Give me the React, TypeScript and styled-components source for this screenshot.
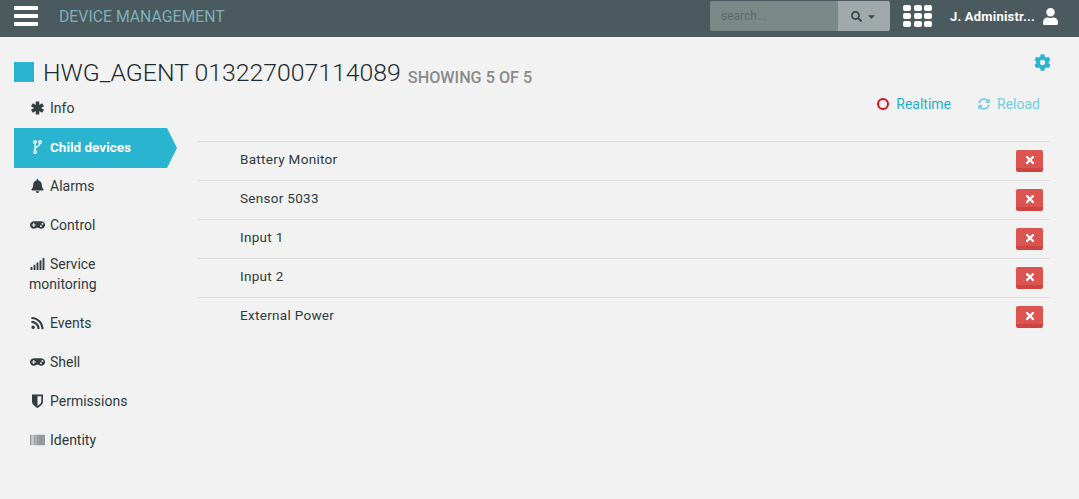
import React from "react";
import { createGlobalStyle, styled } from "styled-components";
import {
  FaBarcode,
  FaBell,
  FaCaretDown,
  FaCog,
  FaGamepad,
  FaRss,
  FaSearch,
  FaSignal,
  FaSyncAlt,
  FaTimes,
  FaUser,
} from "react-icons/fa";

const GlobalStyle = createGlobalStyle`
  html, body {
    margin: 0;
    padding: 0;
    background: #f2f2f2;
    font-family: Roboto, "Liberation Sans", sans-serif;
    color: #2f3a40;
  }
  * { box-sizing: border-box; }
`;

const Page = styled.div`
  width: 100%;
  height: 499px;
  overflow: hidden;
`;

const Header = styled.header`
  height: 37px;
  background: #4a5a5e;
  display: flex;
  align-items: center;
  padding: 0 20px 0 14px;
`;

const Burger = styled.div`
  width: 24px;
  display: flex;
  flex-direction: column;
  gap: 4px;
  margin-top: -5px;
  span {
    display: block;
    height: 4px;
    border-radius: 1px;
    background: #fff;
  }
`;

const AppTitle = styled.div`
  margin-left: 21px;
  font-size: 15.8px;
  color: #7fb0ba;
  flex: 1;
  margin-top: -4px;
`;

const Search = styled.div`
  width: 180px;
  height: 30px;
  display: flex;
  border-radius: 2px;
  overflow: hidden;
  margin-top: -5px;
`;

const SearchInput = styled.div`
  width: 128px;
  background: #7b8987;
  color: #5c6a6a;
  font-size: 12px;
  line-height: 30px;
  padding-left: 11px;
`;

const SearchAddon = styled.div`
  flex: 1;
  background: #a0a9a9;
  color: #38474b;
  display: flex;
  align-items: center;
  justify-content: center;
  gap: 4px;
  font-size: 11px;
`;

const Tiles = styled.div`
  margin: -5px 0 0 13px;
  width: 29px;
  display: grid;
  grid-template-columns: repeat(3, 8px);
  grid-auto-rows: 6px;
  gap: 2px 2.5px;
  span {
    background: #fff;
    border-radius: 2px;
  }
`;

const UserName = styled.div`
  margin: -4px 0 0 18px;
  width: 92px;
  color: #fff;
  font-size: 13px;
  font-weight: 700;
  letter-spacing: 0.2px;
  white-space: nowrap;
`;

const UserIcon = styled(FaUser)`
  color: #fff;
  font-size: 17px;
  margin-top: -5px;
`;

const TitleRow = styled.div`
  display: flex;
  justify-content: space-between;
  align-items: flex-start;
  padding: 17px 28px 0 14px;
  height: 52px;
`;

const Title = styled.div`
  display: flex;
  align-items: center;
  height: 36px;
`;

const TitleSquare = styled.span`
  width: 20px;
  height: 20px;
  background: #29b4d0;
  margin-right: 9px;
`;

const TitleText = styled.h1`
  margin: 0;
  font-size: 24.8px;
  font-weight: 300;
  color: #1f292f;
`;

const TitleNote = styled.small`
  margin-left: 7px;
  font-size: 16.2px;
  font-weight: 500;
  color: #8a8a8a;
  position: relative;
  top: 2px;
`;

const Gear = styled(FaCog)`
  color: #29b4d0;
  font-size: 17px;
`;

const Body = styled.div`
  display: flex;
  padding: 0 29px 0 14px;
  gap: 20px;
`;

const Nav = styled.nav`
  width: 163px;
  flex: none;
`;

const NavItem = styled.div<{ $active?: boolean }>`
  font-size: ${(p) => (p.$active ? "13.5px" : "14px")};
  line-height: 20px;
  padding: 8.5px 40px ${(p) => (p.$active ? "11.5px" : "10.5px")} 15px;
  margin-bottom: ${(p) => (p.$active ? "-1px" : "0")};
  color: ${(p) => (p.$active ? "#fff" : "#2f3a40")};
  font-weight: ${(p) => (p.$active ? 700 : 400)};
  background: ${(p) => (p.$active ? "#29b4d0" : "transparent")};
  clip-path: ${(p) =>
    p.$active
      ? "polygon(0 0, 153px 0, 163px 50%, 153px 100%, 0 100%)"
      : "none"};
  svg {
    display: inline-block;
    width: 15px;
    height: 14px;
    margin: 0 5px 0 1px;
    vertical-align: -2px;
    color: ${(p) => (p.$active ? "#fff" : "#333d42")};
  }
`;

const Content = styled.main`
  flex: 1;
`;

const Toolbar = styled.div`
  height: 52px;
  display: flex;
  justify-content: flex-end;
  align-items: flex-start;
  gap: 27px;
  padding: 5px 10px 0 0;
  font-size: 14px;
`;

const ToolLink = styled.div<{ $muted?: boolean }>`
  display: flex;
  align-items: center;
  gap: 7px;
  height: 20px;
  color: ${(p) => (p.$muted ? "#74cde0" : "#29aecb")};
`;

const Ring = styled.span`
  width: 12px;
  height: 12px;
  border: 2px solid #d90f1c;
  border-radius: 50%;
`;

const Row = styled.div`
  height: 39px;
  border-top: 1px solid #dcdcdc;
  padding: 8px 7px 0 43px;
  display: flex;
  justify-content: space-between;
  align-items: flex-start;
  font-size: 13.5px;
  line-height: 19px;
  letter-spacing: 0.3px;
  color: #2f3a40;
`;

const RemoveButton = styled.button`
  width: 27px;
  height: 22px;
  padding: 0;
  border: 0;
  border-bottom: 4px solid #cf4440;
  border-radius: 2px;
  background: #dc5450;
  color: #fff;
  font-size: 12px;
  display: flex;
  align-items: center;
  justify-content: center;
  svg {
    position: relative;
    top: 1px;
  }
`;

// font awesome 4 shapes that the packaged set draws differently
const AsteriskIcon = () => (
  <svg viewBox="0 0 14 14">
    <g stroke="currentColor" strokeWidth="3.6" strokeLinecap="butt">
      <line x1="7" y1="0.5" x2="7" y2="13.5" />
      <line x1="1.4" y1="3.75" x2="12.6" y2="10.25" />
      <line x1="1.4" y1="10.25" x2="12.6" y2="3.75" />
    </g>
  </svg>
);

const BranchIcon = () => (
  <svg viewBox="0 0 14 14" fill="none" stroke="currentColor" strokeWidth="1.3">
    <circle cx="4.5" cy="2" r="1.3" />
    <circle cx="9.5" cy="2" r="1.3" />
    <circle cx="4.5" cy="12" r="1.3" />
    <path d="M4.5 3.3v7.4M9.5 3.3c0 3.4-5 2.8-5 6" />
  </svg>
);

const ShieldIcon = () => (
  <svg viewBox="0 0 14 14">
    <path
      fill="currentColor"
      fillRule="evenodd"
      d="M1.5 0.5h11v7c0 3-3 5-5.5 6.5C4.500 12.500 1.500 10.500 1.500 7.500zM7 2.200v9.800c1.800-1.100 3.800-2.600 3.800-4.500V2.200z"
    />
  </svg>
);

const navItems = [
  { label: "Info", icon: <AsteriskIcon /> },
  { label: "Child devices", icon: <BranchIcon />, active: true },
  { label: "Alarms", icon: <FaBell /> },
  { label: "Control", icon: <FaGamepad /> },
  { label: "Service monitoring", icon: <FaSignal /> },
  { label: "Events", icon: <FaRss /> },
  { label: "Shell", icon: <FaGamepad /> },
  { label: "Permissions", icon: <ShieldIcon /> },
  { label: "Identity", icon: <FaBarcode /> },
];

const devices = [
  "Battery Monitor",
  "Sensor 5033",
  "Input 1",
  "Input 2",
  "External Power",
];

const App = () => {
  return (
    <Page>
      <GlobalStyle />
      <Header>
        <Burger>
          <span />
          <span />
          <span />
        </Burger>
        <AppTitle>DEVICE MANAGEMENT</AppTitle>
        <Search>
          <SearchInput>search...</SearchInput>
          <SearchAddon>
            <FaSearch />
            <FaCaretDown />
          </SearchAddon>
        </Search>
        <Tiles>
          {Array.from({ length: 9 }).map((_, i) => (
            <span key={i} />
          ))}
        </Tiles>
        <UserName>J. Administr...</UserName>
        <UserIcon />
      </Header>
      <TitleRow>
        <Title>
          <TitleSquare />
          <TitleText>
            HWG_AGENT 013227007114089
            <TitleNote>SHOWING 5 OF 5</TitleNote>
          </TitleText>
        </Title>
        <Gear />
      </TitleRow>
      <Body>
        <Nav>
          {navItems.map((item) => (
            <NavItem key={item.label} $active={item.active}>
              {item.icon}
              {item.label}
            </NavItem>
          ))}
        </Nav>
        <Content>
          <Toolbar>
            <ToolLink>
              <Ring />
              Realtime
            </ToolLink>
            <ToolLink $muted>
              <FaSyncAlt size={12} />
              Reload
            </ToolLink>
          </Toolbar>
          {devices.map((name) => (
            <Row key={name}>
              {name}
              <RemoveButton>
                <FaTimes />
              </RemoveButton>
            </Row>
          ))}
        </Content>
      </Body>
    </Page>
  );
};

export default App;
